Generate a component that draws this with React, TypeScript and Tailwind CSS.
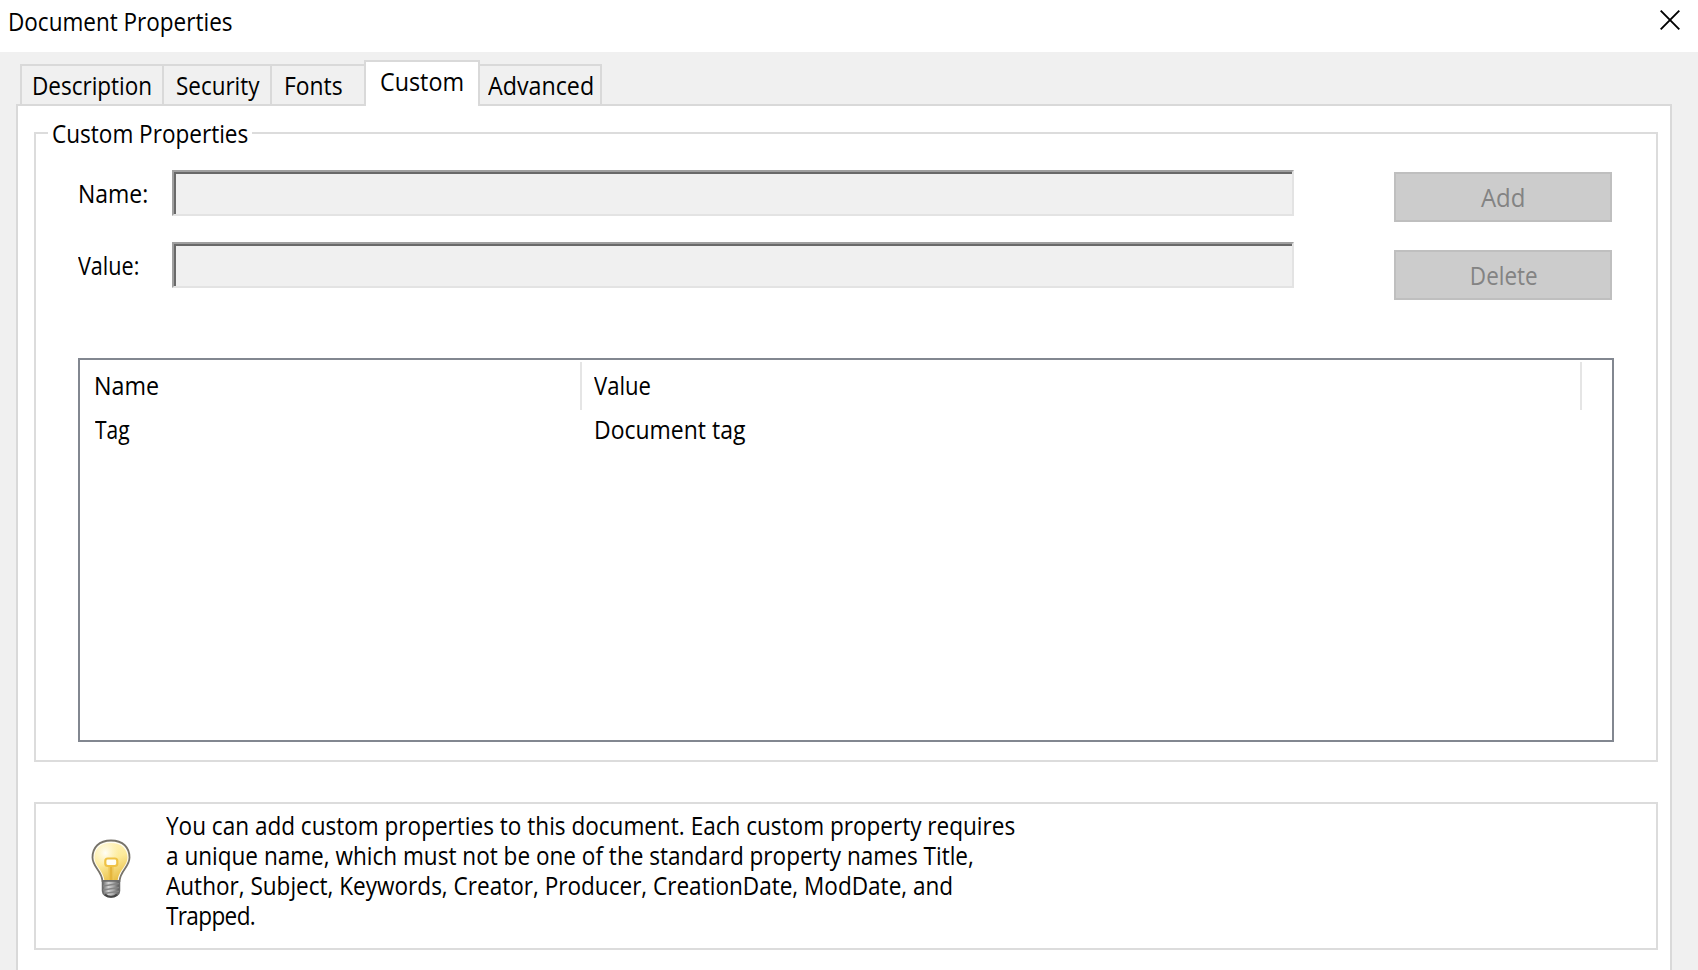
import type { ReactNode } from "react";

/** Single run of dialog text; the horizontal scale narrows the face. */
function Label({ className, children }: { className: string; children: ReactNode }) {
  return (
    <span className={`block w-max origin-left whitespace-nowrap ${className}`}>{children}</span>
  );
}

const tabs = [
  { name: "Description", box: "w-[144px] border-x-2 pl-[10px]", text: "scale-x-[0.9]" },
  { name: "Security", box: "w-[108px] border-r-2 pl-[12px]", text: "scale-x-[0.897]" },
  { name: "Fonts", box: "w-[92px] pl-[12px]", text: "scale-x-[0.915]" },
  { name: "Custom", active: true, box: "w-[116px] pl-[14px]", text: "scale-x-[0.933]" },
  { name: "Advanced", box: "w-[122px] border-r-2 pl-[8px]", text: "scale-x-[0.93]" },
];

const fields = [
  { name: "Name:", text: "scale-x-[0.919]" },
  { name: "Value:", text: "scale-x-[0.863]" },
];

const buttons = [
  { name: "Add", text: "scale-x-[0.96]" },
  { name: "Delete", text: "translate-x-px scale-x-[0.898]" },
];

const hint = [
  "You can add custom properties to this document. Each custom property requires",
  "a unique name, which must not be one of the standard property names Title,",
  "Author, Subject, Keywords, Creator, Producer, CreationDate, ModDate, and",
];

function Bulb() {
  return (
    <svg width="42" height="62" viewBox="0 0 42 62">
      <defs>
        <linearGradient id="glass" x1="0.2" y1="0" x2="0.6" y2="1">
          <stop offset="0" stopColor="#fff3bf" />
          <stop offset="0.5" stopColor="#fdeb9b" />
          <stop offset="1" stopColor="#e9c04a" />
        </linearGradient>
        <radialGradient id="shine" cx="0.33" cy="0.27" r="0.4">
          <stop offset="0" stopColor="#fffef8" />
          <stop offset="1" stopColor="#fff6cc" stopOpacity="0" />
        </radialGradient>
        <linearGradient id="metal" x1="0" x2="1">
          <stop offset="0" stopColor="#6a6a6a" />
          <stop offset="0.35" stopColor="#d2d2d2" />
          <stop offset="0.6" stopColor="#b0b0b0" />
          <stop offset="1" stopColor="#555555" />
        </linearGradient>
      </defs>
      <path d="M21 1.5 C9 1.5 2.5 8.5 2.5 18.5 C2.5 28 11.5 31 12.5 42 H29.5 C30.5 31 39.5 28 39.5 18.5 C39.5 8.5 33 1.5 21 1.5Z" fill="#fffdf2" stroke="#77736a" strokeWidth="1.8" />
      <path d="M21 4 C10.500 4 4.500 10 4.500 18.500 C4.500 27 13 31 14.300 41 H27.700 C29 31 37.500 27 37.500 18.500 C37.500 10 31.500 4 21 4Z" fill="url(#glass)" />
      <path d="M21 4 C10.500 4 4.500 10 4.500 18.500 C4.500 27 13 31 14.300 41 H27.700 C29 31 37.500 27 37.500 18.500 C37.500 10 31.500 4 21 4Z" fill="url(#shine)" />
      <path d="M21 28 V41" stroke="#e5b53c" strokeWidth="3" />
      <path d="M18.800 28 V41 M23.200 28 V41" stroke="#efc95a" strokeWidth="1" />
      <rect x="15.300" y="19.500" width="12" height="7.500" rx="2.500" fill="#fffef6" stroke="#efc245" strokeWidth="2.200" />
      <path d="M12.500 42 H29.500 V52 C29.500 55.500 25.500 58 21 58 C16.500 58 12.500 55.500 12.500 52Z" fill="url(#metal)" stroke="#6b6b6b" strokeWidth="1.500" />
      <path d="M13 47 L29 44.500 M13 51 L29 48.500 M14 54.500 L29 52.200" stroke="#858585" strokeWidth="1.400" />
      <path d="M15 55.500 C18 58.500 24 58.500 27 55.500" stroke="#454545" strokeWidth="2" fill="none" />
    </svg>
  );
}

export default function App() {
  return (
    <div className="flex h-[970px] w-[1698px] flex-col overflow-hidden bg-[#f0f0f0] font-['Open_Sans','Noto_Sans',sans-serif] text-[25px] leading-[30px] text-black">
      <header className="flex h-[52px] shrink-0 items-start justify-between bg-white pt-[6px] pr-[18px] pl-[8px]">
        <Label className="scale-x-[0.9]">Document Properties</Label>
        <svg className="mt-[4px]" width="20" height="20" viewBox="0 0 20 20">
          <path d="M0.700 0.700 L19.300 19.300 M19.300 0.700 L0.700 19.300" stroke="#000" strokeWidth="1.900" />
        </svg>
      </header>

      <nav className="flex h-[52px] shrink-0 items-end pl-[20px]">
        {tabs.map((tab) => (
          <div
            key={tab.name}
            className={`${tab.active ? "z-10 -mb-[2px] h-[46px] border-x-2 bg-white" : "h-[40px]"} shrink-0 border-t-2 border-[#d9d9d9] pt-[4px] ${tab.box}`}
          >
            <Label className={tab.text}>{tab.name}</Label>
          </div>
        ))}
      </nav>

      <main className="mr-[26px] ml-[16px] flex-1 border-x-2 border-t-2 border-[#d9d9d9] bg-white pt-[26px] pr-[12px] pl-[16px]">
        <section className="h-[630px] border-2 border-[#dcdcdc]">
          <h2 className="-mt-[16px] ml-[12px] w-[204px] bg-white pl-[4px]">
            <Label className="scale-x-[0.902]">Custom Properties</Label>
          </h2>

          <div className="mt-[22px] flex pl-[42px]">
            <div className="flex flex-col gap-[26px]">
              {fields.map((field) => (
                <div key={field.name} className="flex h-[46px]">
                  <div className="w-[94px] pt-[8px]">
                    <Label className={field.text}>{field.name}</Label>
                  </div>
                  <div className="w-[1122px] border-2 border-t-[#a0a0a0] border-r-[#e3e3e3] border-b-[#e3e3e3] border-l-[#a0a0a0]">
                    <div className="h-full border-t-2 border-l-2 border-[#696969] bg-[#f0f0f0]" />
                  </div>
                </div>
              ))}
            </div>
            <div className="mt-[2px] ml-[100px] flex flex-col gap-[28px]">
              {buttons.map((button) => (
                <button
                  key={button.name}
                  className="flex h-[50px] w-[218px] justify-center border-2 border-[#bfbfbf] bg-[#cccccc] pt-[8px] text-[#838383]"
                >
                  <span className={button.text}>{button.name}</span>
                </button>
              ))}
            </div>
          </div>

          <div className="mt-[58px] ml-[42px] h-[384px] w-[1536px] border-2 border-[#828790]">
            <div className="mt-[2px] flex h-[48px]">
              <div className="w-[502px] border-r-2 border-[#e5e5e5] pt-[8px] pl-[14px]">
                <Label className="scale-x-[0.93]">Name</Label>
              </div>
              <div className="w-[1000px] border-r-2 border-[#e5e5e5] pt-[8px] pl-[12px]">
                <Label className="scale-x-[0.883]">Value</Label>
              </div>
            </div>
            <div className="mt-[4px] flex">
              <div className="w-[502px] pl-[15px]">
                <Label className="scale-x-[0.84]">Tag</Label>
              </div>
              <div className="pl-[12px]">
                <Label className="scale-x-[0.919]">Document tag</Label>
              </div>
            </div>
          </div>
        </section>

        <section className="mt-[40px] flex h-[148px] border-2 border-[#dcdcdc] pt-[6px]">
          <div className="mt-[29px] ml-[54px] w-[76px]">
            <Bulb />
          </div>
          <p className="w-max origin-left scale-x-[0.902] whitespace-pre">
            {hint.join("\n") + "\n"}
            <span className="tracking-[-0.7px]">Trapped.</span>
          </p>
        </section>
      </main>
    </div>
  );
}
